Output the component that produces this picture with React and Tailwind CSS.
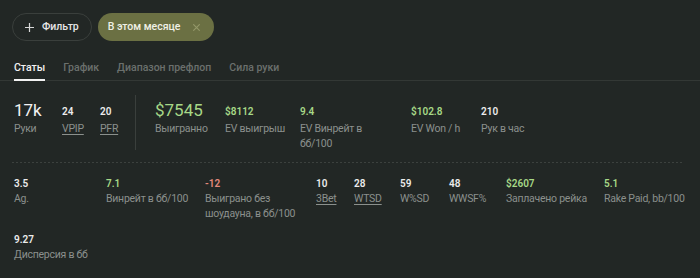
import React from "react";

const font = { fontFamily: 'Roboto, "Noto Sans", sans-serif' };

function Stat({ value, label, color = "text-[#ececec]", underline = false, w = "", lw = "" }) {
  return (
    <div className={`flex flex-col shrink-0 ${w}`}>
      <div className={`text-[10px] font-semibold leading-[15px] ${color}`}>{value}</div>
      <div className={`text-[10.5px] leading-[15px] tracking-[-0.25px] text-[#8b908d] ${lw} ${underline ? "underline underline-offset-2" : ""}`}>{label}</div>
    </div>
  );
}

function Small({ value, label, color = "text-[#ececec]", underline = false, w = "", lw = "" }) {
  return (
    <div className={`flex flex-col shrink-0 pt-[4px] ${w}`}>
      <div className={`text-[10px] font-semibold leading-[15px] ${color}`}>{value}</div>
      <div className={`mt-[2px] text-[10.5px] leading-[15px] tracking-[-0.25px] text-[#8b908d] ${lw} ${underline ? "underline underline-offset-2" : ""}`}>{label}</div>
    </div>
  );
}

function Big({ value, label, color, w }) {
  return (
    <div className={`flex flex-col shrink-0 ${w}`}>
      <div className={`text-[17px] leading-[20px] ${color}`}>{value}</div>
      <div className="mt-[1px] text-[10.5px] leading-[15px] tracking-[-0.25px] text-[#8b908d]">{label}</div>
    </div>
  );
}

export default function App() {
  return (
    <div className="w-[700px] h-[278px] bg-[#222725] overflow-hidden" style={font}>
      <div className="flex gap-[6px] pt-[13px] pl-[12px]">
        <button className="h-[28px] pl-[12px] pr-[12px] rounded-full border border-[#3a3f3c] flex items-center gap-[8px] text-[#e6e6e6] text-[10.5px] font-medium">
          <svg width="9" height="9" viewBox="0 0 9 9"><path d="M4.5 0v9M0 4.5h9" stroke="#d8d8d8" strokeWidth="1.2" /></svg>
          Фильтр
        </button>
        <div className="h-[28px] pl-[10px] pr-[14px] rounded-full bg-[#6b7043] flex items-center gap-[13px] text-[#f0f0e6] text-[10.5px] font-medium">
          В этом месяце
          <svg width="7" height="7" viewBox="0 0 7 7"><path d="M0.3 0.3l6.4 6.4M6.7 0.3l-6.4 6.4" stroke="#949869" strokeWidth="1.1" /></svg>
        </div>
      </div>

      <div className="mt-[19px] flex gap-[18px] px-[14px] border-b border-[#333835] text-[10.5px] leading-[15px] font-medium">
        <div className="text-[#f2f2f2] pb-[4px] border-b-2 border-[#f2f2f2] -mb-px">Статы</div>
        <div className="text-[#6b706d] pb-[4px]">График</div>
        <div className="text-[#6b706d] pb-[4px]">Диапазон префлоп</div>
        <div className="text-[#6b706d] pb-[4px]">Сила руки</div>
      </div>

      <div className="mx-[12px] pt-[19px] pb-[11px] px-[2px] flex items-start">
        <Big value="17k" label="Руки" color="text-[#f2f2f2]" w="w-[48px]" />
        <Small value="24" label="VPIP" underline w="w-[38px]" />
        <Small value="20" label="PFR" underline w="w-[35px]" />
        <div className="w-px h-[55px] bg-[#3a3f3c] -mt-[5px] mr-[19px] shrink-0"></div>
        <Big value="$7545" label="Выигранно" color="text-[#a7d887]" w="w-[70px]" />
        <Small value="$8112" label="EV выигрыш" color="text-[#a7d887]" w="w-[75px]" />
        <Small value="9.4" label="EV Винрейт в бб/100" color="text-[#a7d887]" w="w-[111px]" lw="w-[70px]" />
        <Small value="$102.8" label="EV Won / h" color="text-[#a7d887]" w="w-[70px]" />
        <Small value="210" label="Рук в час" />
      </div>

      <div className="mx-[12px] w-[672px] h-px bg-[repeating-linear-gradient(90deg,#3c413e_0px,#3c413e_2px,transparent_2px,transparent_4px)]"></div>

      <div className="px-[14px] pt-[13px] flex flex-wrap gap-y-[11px] w-[700px]">
        <Stat value="3.5" label="Ag." w="w-[92px]" />
        <Stat value="7.1" label="Винрейт в бб/100" color="text-[#a7d887]" w="w-[99px]" />
        <Stat value="-12" label="Выиграно без шоудауна, в бб/100" color="text-[#e3897c]" w="w-[111px]" lw="w-[93px]" />
        <Stat value="10" label="3Bet" underline w="w-[38px]" />
        <Stat value="28" label="WTSD" underline w="w-[46px]" />
        <Stat value="59" label="W%SD" w="w-[49px]" />
        <Stat value="48" label="WWSF%" w="w-[57px]" />
        <Stat value="$2607" label="Заплачено рейка" color="text-[#a7d887]" w="w-[98px]" />
        <Stat value="5.1" label="Rake Paid, bb/100" color="text-[#a7d887]" w="w-[82px]" lw="whitespace-nowrap" />
        <Stat value="9.27" label="Дисперсия в бб" w="w-[100px]" />
      </div>
    </div>
  );
}
